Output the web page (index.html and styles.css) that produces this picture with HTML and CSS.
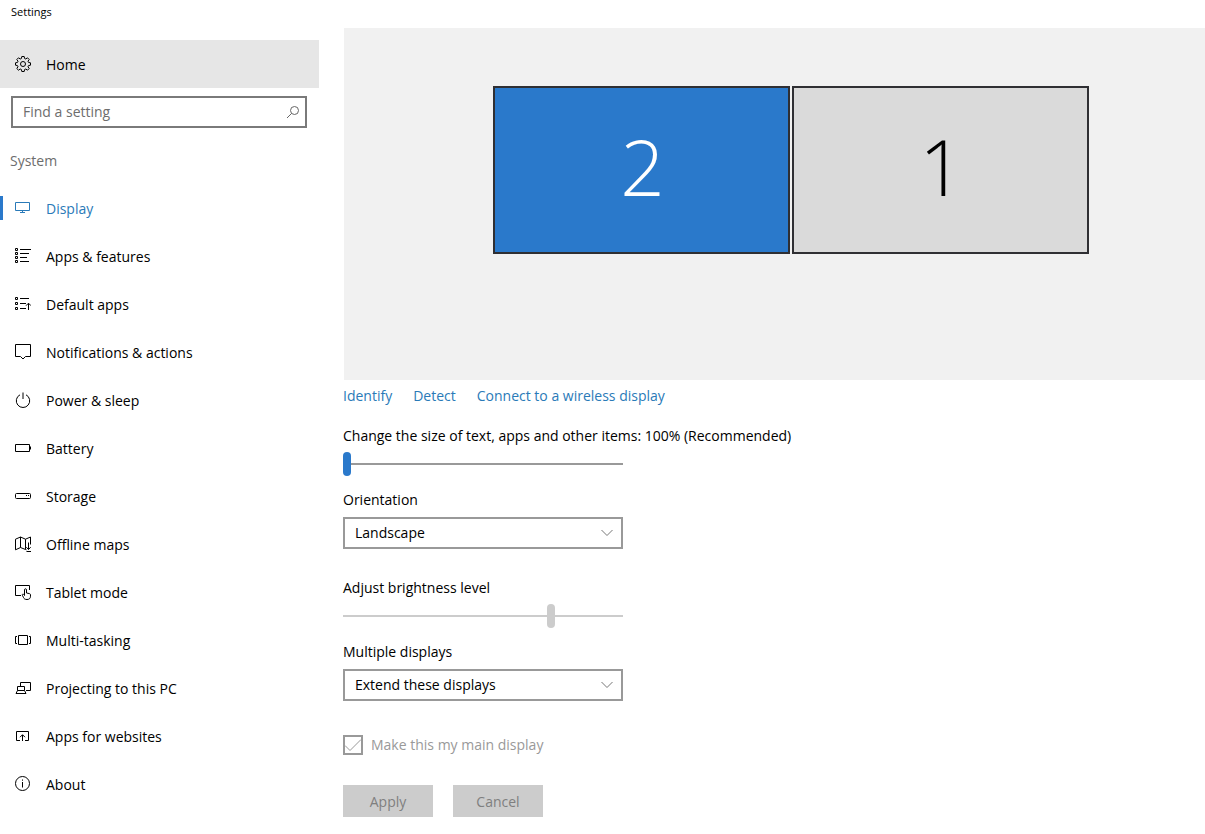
FILE: index.html
```html
<!DOCTYPE html>
<html lang="en">
<head>
<meta charset="utf-8">
<meta name="viewport" content="width=device-width, initial-scale=1">
<title>Settings</title>
<link rel="stylesheet" href="styles.css">
</head>
<body>
<div class="window">
  <aside class="sidebar">
    <h1 class="window-title">Settings</h1>
    <a class="nav-item nav-home" href="#home">
      <svg class="icon" viewBox="0 0 16 16"><path d="M6.800.5h2.400l.4 2 1.200.5 1.700-1.200 1.700 1.700L13 5.200l.5 1.200 2 .4v2.400l-2 .4-.5 1.200 1.200 1.700-1.700 1.700L10.800 13l-1.200.5-.4 2H6.800l-.4-2-1.200-.5-1.700 1.200-1.700-1.700L3 10.800l-.5-1.200-2-.4V6.800l2-.4L3 5.200 1.800 3.500l1.700-1.700L5.200 3l1.200-.5z"/><circle cx="8" cy="8" r="2.500"/></svg>
      <span>Home</span>
    </a>
    <div class="search">
      <input class="search-input" type="search" placeholder="Find a setting" aria-label="Find a setting">
      <svg class="search-icon" viewBox="0 0 14 14"><circle cx="8.500" cy="5.500" r="4"/><path d="M5.700 8.300 1 13"/></svg>
    </div>
    <h2 class="section-title">System</h2>
    <nav class="nav" aria-label="System">
      <a class="nav-item nav-current" href="#display" aria-current="page">
        <svg class="icon" viewBox="0 0 16 16"><path d="M.5 2.500h14v8H.5zM7.500 10.500v2M5 12.500h5"/></svg>
        <span>Display</span>
      </a>
      <a class="nav-item" href="#apps">
        <svg class="icon" viewBox="0 0 16 16"><path d="M.5.5h2v2h-2zM.5 4.500h2v2h-2zM.5 8.500h2v2h-2zM.5 12.500h2v2h-2zM5 1.500h11M5 5.500h9M5 9.500h7M5 13.500h9"/></svg>
        <span>Apps &amp; features</span>
      </a>
      <a class="nav-item" href="#default-apps">
        <svg class="icon" viewBox="0 0 16 16"><path d="M.5 1.500h2v2h-2zM.5 6.500h2v2h-2zM.5 11.500h2v2h-2zM5 2.500h9M5 7.500h6M5 12.500h6M13.500 14V7.500M11 9.700l2.500-2.500L16 9.700"/></svg>
        <span>Default apps</span>
      </a>
      <a class="nav-item" href="#notifications">
        <svg class="icon" viewBox="0 0 16 16"><path d="M.5.5h15v12h-5L8 15l-2.500-2.500h-5z"/></svg>
        <span>Notifications &amp; actions</span>
      </a>
      <a class="nav-item" href="#power">
        <svg class="icon" viewBox="0 0 16 16"><path d="M5 2.800a6.700 6.700 0 1 0 6 0M8 .5V7"/></svg>
        <span>Power &amp; sleep</span>
      </a>
      <a class="nav-item" href="#battery">
        <svg class="icon" viewBox="0 0 16 16"><path d="M.5 4.500h14v7H.5zM15.500 6.500v3"/></svg>
        <span>Battery</span>
      </a>
      <a class="nav-item" href="#storage">
        <svg class="icon" viewBox="0 0 16 16"><rect x=".5" y="5.500" width="15" height="5" rx="1"/><path d="M11 7.500h1M13 7.500h1"/></svg>
        <span>Storage</span>
      </a>
      <a class="nav-item" href="#maps">
        <svg class="icon" viewBox="0 0 16 16"><path d="M11.500 13.800 10.500 13.500l-5-2-5 2.300V3.200l5-2.200 5 2.200 5-2.200v7.500M5.500 1v10.500M10.500 3.200v10.300M13.500 6.500v7M11.300 11.200l2.200 2.300 2.200-2.300M11.500 15.500H16"/></svg>
        <span>Offline maps</span>
      </a>
      <a class="nav-item" href="#tablet">
        <svg class="icon" viewBox="0 0 16 16"><path d="M6 11.500H.5v-10h14V6M9.500 11.500V5.800c0-1.400 2-1.400 2 0V9l3 .6c.7.200 1 .6 1 1.200v1.400c0 2.200-1.300 3.300-3.500 3.300-2 0-3-.6-3.600-2.200l-1-2c-.5-1.200.8-1.600 1.300-.8z"/></svg>
        <span>Tablet mode</span>
      </a>
      <a class="nav-item" href="#multitasking">
        <svg class="icon" viewBox="0 0 16 16"><path d="M3.500 3.500h9v9h-9zM2 4.500H.5v7H2M14 4.500h1.500v7H14"/></svg>
        <span>Multi-tasking</span>
      </a>
      <a class="nav-item" href="#projecting">
        <svg class="icon" viewBox="0 0 16 16"><path d="M5.500 6.500v-4h10v8H11M2.500 6.500h7v4h-7zM2.500 10.500l-1.500 3h10l-1.500-3"/></svg>
        <span>Projecting to this PC</span>
      </a>
      <a class="nav-item" href="#websites">
        <svg class="icon" viewBox="0 0 16 16"><path d="M5 12.500H1.500v-9h12v9H10M7.500 13V7M5 9.200l2.500-2.500L10 9.200"/></svg>
        <span>Apps for websites</span>
      </a>
      <a class="nav-item" href="#about">
        <svg class="icon" viewBox="0 0 16 16"><circle cx="7.500" cy="7.500" r="7"/><path d="M7.500 6v5.500M7.500 3.500v1.200"/></svg>
        <span>About</span>
      </a>
    </nav>
  </aside>

  <main class="content">
    <section class="preview" aria-label="Display arrangement">
      <button class="monitor monitor-selected" type="button">2</button>
      <button class="monitor" type="button">1</button>
    </section>
    <div class="links">
      <a href="#identify">Identify</a>
      <a href="#detect">Detect</a>
      <a href="#wireless">Connect to a wireless display</a>
    </div>
    <form class="form">
      <div class="field">
        <label for="scale">Change the size of text, apps and other items: 100% (Recommended)</label>
        <input class="slider" id="scale" type="range" min="100" max="200" value="100">
      </div>
      <div class="field">
        <label for="orientation">Orientation</label>
        <div class="select">
          <select id="orientation"><option>Landscape</option></select>
          <svg class="chevron" viewBox="0 0 12 8"><path d="m.5 1 5.500 5.500L11.500 1"/></svg>
        </div>
      </div>
      <div class="field field-spaced">
        <label for="brightness">Adjust brightness level</label>
        <input class="slider" id="brightness" type="range" min="0" max="100" value="75" disabled>
      </div>
      <div class="field">
        <label for="multiple">Multiple displays</label>
        <div class="select">
          <select id="multiple"><option>Extend these displays</option></select>
          <svg class="chevron" viewBox="0 0 12 8"><path d="m.5 1 5.500 5.500L11.500 1"/></svg>
        </div>
      </div>
      <div class="check">
        <span class="check-box">
          <input id="main-display" type="checkbox" checked disabled>
          <svg class="check-mark" viewBox="0 0 20 20"><path d="m2 10.500 5 5L18 4.500"/></svg>
        </span>
        <label for="main-display">Make this my main display</label>
      </div>
      <div class="actions">
        <button class="button" type="submit" disabled>Apply</button>
        <button class="button" type="reset" disabled>Cancel</button>
      </div>
    </form>
  </main>
</div>
</body>
</html>
```

FILE: styles.css
```css
* {
  box-sizing: border-box;
}

body {
  margin: 0;
  background: #fff;
  color: #000;
  font: 14px/24px "Open Sans", "Noto Sans", sans-serif;
}

input,
select,
button {
  font: inherit;
  color: inherit;
}

a {
  color: inherit;
  text-decoration: none;
}

svg {
  fill: none;
  stroke: currentColor;
  stroke-width: 1;
}

.window {
  display: flex;
  gap: 24px;
  min-height: 100vh;
}

/* Sidebar */
.sidebar {
  flex: 0 0 319px;
}

.window-title {
  margin: 0 0 16px;
  padding-left: 11px;
  font-size: 11px;
  font-weight: 400;
}

.nav-item {
  display: flex;
  align-items: center;
  gap: 15px;
  height: 48px;
  padding-left: 15px;
}

.nav-item span {
  padding-top: 2px;
}

.nav-home {
  background: #e6e6e6;
}

.icon {
  flex: none;
  width: 16px;
  height: 16px;
}

.search {
  display: grid;
  align-items: center;
  margin: 8px 12px 8px 11px;
}

.search-input {
  grid-area: 1 / 1;
  width: 100%;
  height: 32px;
  padding: 0 32px 2px 10px;
  border: 2px solid #7a7a7a;
  border-radius: 0;
  background: #fff;
  appearance: none;
}

.search-input::placeholder {
  color: #6d6d6d;
  opacity: 1;
}

.search-icon {
  grid-area: 1 / 1;
  justify-self: end;
  width: 14px;
  height: 14px;
  margin-right: 7px;
  color: #666;
}

.section-title {
  margin: 0;
  padding: 13px 0 11px 10px;
  color: #6d6d6d;
  font-size: 14px;
  font-weight: 400;
}

.nav-current {
  color: #2a7ab8;
  background: linear-gradient(#2a79cb, #2a79cb) left center / 3px 24px no-repeat;
}

/* Content */
.content {
  flex: 1;
  min-width: 0;
  padding-top: 28px;
}

.preview {
  display: flex;
  justify-content: center;
  align-items: flex-start;
  gap: 2px;
  height: 352px;
  margin-left: 1px;
  padding: 58px 0 0 33px;
  background: #f1f1f1;
}

.monitor {
  width: 297px;
  height: 168px;
  padding: 0 0 8px 2px;
  border: 2px solid #2f2f33;
  background: #dadada;
  color: #000;
  font-size: 78px;
  font-weight: 300;
  line-height: 104px;
}

.monitor-selected {
  background: #2a79cb;
  color: #fff;
}

.links {
  display: flex;
  gap: 21px;
  margin: 4px 0 16px;
  color: #2a7ab8;
}

.form {
  display: flex;
  flex-direction: column;
  gap: 12px;
}

.field {
  display: flex;
  flex-direction: column;
  gap: 4px;
}

.field-spaced {
  margin-top: 15px;
}

.slider {
  width: 280px;
  height: 24px;
  margin: 0;
  background: none;
  appearance: none;
}

.slider::-webkit-slider-runnable-track {
  height: 2px;
  background: #999;
}

.slider::-webkit-slider-thumb {
  width: 8px;
  height: 24px;
  margin-top: -11px;
  border-radius: 4px;
  background: #2a79cb;
  appearance: none;
}

.slider:disabled::-webkit-slider-runnable-track,
.slider:disabled::-webkit-slider-thumb {
  background: #ccc;
}

.select {
  display: grid;
  align-items: center;
  width: 280px;
  padding-top: 1px;
}

.select select {
  grid-area: 1 / 1;
  width: 100%;
  height: 32px;
  padding: 0 32px 0 10px;
  border: 2px solid #999;
  border-radius: 0;
  background: #fff;
  appearance: none;
}

.chevron {
  grid-area: 1 / 1;
  justify-self: end;
  width: 12px;
  height: 8px;
  margin-right: 10px;
  color: #777;
  pointer-events: none;
}

.check {
  display: flex;
  align-items: center;
  gap: 8px;
  margin-top: 20px;
  color: #999;
}

.check-box {
  display: grid;
}

.check-box input {
  grid-area: 1 / 1;
  width: 20px;
  height: 20px;
  margin: 0;
  border: 2px solid #999;
  background: #fff;
  appearance: none;
}

.check-mark {
  grid-area: 1 / 1;
  width: 20px;
  height: 20px;
  pointer-events: none;
}

.actions {
  display: flex;
  gap: 20px;
  margin-top: 16px;
}

.button {
  width: 90px;
  height: 32px;
  padding: 2px 0 0;
  border: 0;
  background: #ccc;
  color: #7f7f7f;
}
```
